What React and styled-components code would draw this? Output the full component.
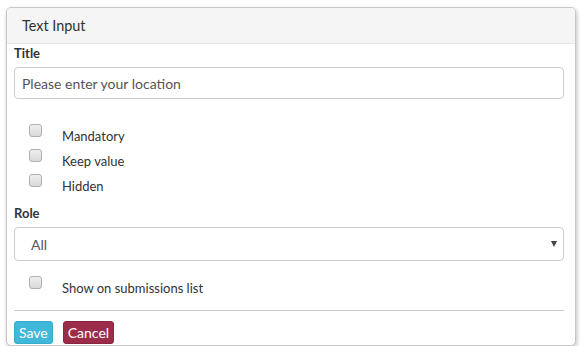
import styled, { createGlobalStyle } from "styled-components";

const Global = createGlobalStyle`
    body {
        margin: 0;
        background: #fff;
        font-family: Lato, "Open Sans", "Liberation Sans", sans-serif;
        color: #333;
    }
`
const Panel = styled.div`
    margin: 7px 8px 0 6px;
    width: 568px;
    border: 1px solid #c8c8c8;
    border-radius: 5px;
    background: #fff;
    box-shadow: 1px 2px 4px rgba(0,0,0,.25);
    overflow: hidden;
`
const Heading = styled.div`
    height: 35px;
    display: flex;
    align-items: center;
    padding-left: 15px;
    background: #f5f5f5;
    border-bottom: 1px solid #e6e6e6;
    font-size: 14.4px;
    color: #333;
`
const Body = styled.div`
    padding: 0 11px 1px 7px;
    display: flex;
    flex-direction: column;
`
const Label = styled.div`
    font-size: 13px;
    font-weight: bold;
    line-height: 18px;
    margin-top: ${props => props.top || 0}px;
    color: #333;
`
const TextBox = styled.input`
    box-sizing: border-box;
    margin-top: 5px;
    height: 32px;
    width: 100%;
    border: 1px solid #ccc;
    border-radius: 4px;
    padding: 0 7px;
    font-family: inherit;
    font-size: 14px;
    color: #555;
    outline: none;
    &::placeholder { color: #555; opacity: 1; }
`
const Checks = styled.div`
    display: flex;
    flex-direction: column;
    margin-top: ${props => props.top}px;
`
const CheckRow = styled.label`
    display: flex;
    height: 25px;
    line-height: 25px;
    font-size: 13px;
    color: #333;
`
const CheckText = styled.span`
    padding-top: 2px;
`
const Box = styled.input`
    appearance: none;
    box-sizing: border-box;
    width: 13px;
    height: 13px;
    margin: 2px 20px 0 15px;
    border: 1px solid #b0b0b0;
    border-radius: 3px;
    background: linear-gradient(#eee, #d9d9d9);
`
const Select = styled.div`
    box-sizing: border-box;
    margin-top: 5px;
    height: 34px;
    display: flex;
    align-items: center;
    justify-content: space-between;
    padding: 0 5px 0 16px;
    border: 1px solid #ccc;
    border-radius: 4px;
    font-size: 14px;
    color: #555;
`
const Arrow = styled.span`
    width: 0;
    height: 0;
    border-left: 3.5px solid transparent;
    border-right: 3.5px solid transparent;
    border-top: 6px solid #444;
    margin-right: 1px;
`
const Rule = styled.hr`
    margin: 11px 0 0;
    border: 0;
    border-top: 1px solid #ccc;
`
const Buttons = styled.div`
    display: flex;
    gap: 10px;
    margin-top: 10px;
`
const Button = styled.button`
    height: 23px;
    padding: 0 4px;
    border: 1px solid ${props => props.border};
    border-radius: 3px;
    background: ${props => props.bg};
    color: #fff;
    font-family: inherit;
    font-size: 14px;
    line-height: 21px;
`

const Check = ({ children }) => (
    <CheckRow>
        <Box type="checkbox" />
        <CheckText>{children}</CheckText>
    </CheckRow>
)

const App = () => {
    return (
        <>
            <Global />
            <Panel>
                <Heading>Text Input</Heading>
                <Body>
                    <Label>Title</Label>
                    <TextBox placeholder="Please enter your location" />
                    <Checks top={23}>
                        <Check>Mandatory</Check>
                        <Check>Keep value</Check>
                        <Check>Hidden</Check>
                    </Checks>
                    <Label top={7}>Role</Label>
                    <Select>
                        All
                        <Arrow />
                    </Select>
                    <Checks top={13}>
                        <Check>Show on submissions list</Check>
                    </Checks>
                    <Rule />
                    <Buttons>
                        <Button bg="#3fb8da" border="#36abcc">Save</Button>
                        <Button bg="#9b2d4a" border="#8a2540">Cancel</Button>
                    </Buttons>
                </Body>
            </Panel>
        </>
    )
}

export default App
